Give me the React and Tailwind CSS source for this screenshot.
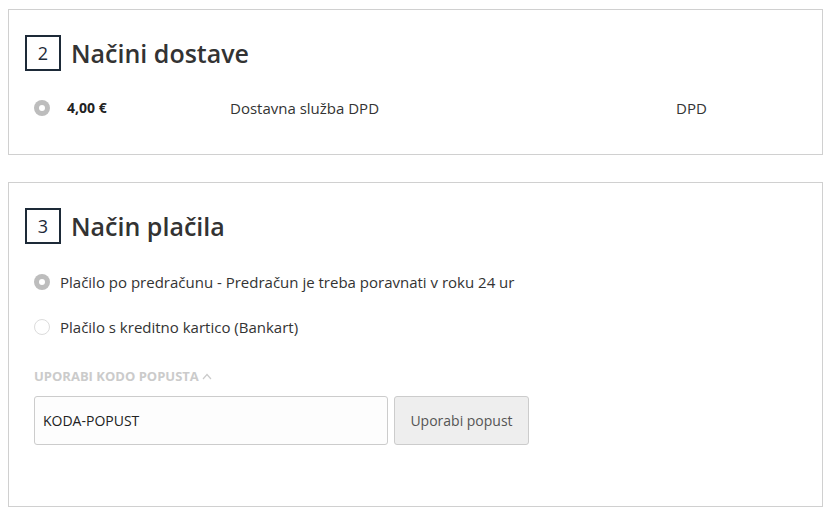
import { useState } from 'react';

function StepHeader({ num, title }) {
  return (
    <div className="flex items-center gap-[10px]">
      <div className="flex h-[36px] w-[36px] items-center justify-center border-2 border-[#1d2a38] text-[18px] text-[#1d2a38]">
        {num}
      </div>
      <h2 className="text-[25px] font-semibold leading-none text-[#333]">{title}</h2>
    </div>
  );
}

function Radio({ checked, onClick }) {
  return (
    <button
      onClick={onClick}
      className={`flex h-4 w-4 shrink-0 items-center justify-center rounded-full ${
        checked ? 'bg-[#bdbdbd]' : 'border border-[#dcdcdc] bg-white'
      }`}
    >
      {checked && <span className="h-[6px] w-[6px] rounded-full bg-white" />}
    </button>
  );
}

export default function App() {
  const [payment, setPayment] = useState('predracun');
  const [code, setCode] = useState('KODA-POPUST');

  return (
    <div
      className="min-h-[516px] bg-white pl-2 pr-[7px] pt-[9px] text-[#333]"
      style={{ fontFamily: '"Open Sans", "Liberation Sans", sans-serif' }}
    >
      <section className="h-[146px] border border-[#d0d0d0] px-4 pt-[25px]">
        <StepHeader num="2" title="Načini dostave" />
        <div className="mt-[27px] flex items-center text-[15px] leading-[20px]">
          <div className="w-[42px] pl-[9px]">
            <Radio checked />
          </div>
          <div className="w-[163px] text-[14px] font-bold text-[#222]">4,00 €</div>
          <div className="w-[446px]">Dostavna služba DPD</div>
          <div>DPD</div>
        </div>
      </section>

      <section className="mt-[27px] h-[325px] border border-[#d0d0d0] px-4 pt-[25px]">
        <StepHeader num="3" title="Način plačila" />

        <div className="mt-[28px] space-y-[25px] pl-[9px] text-[15px] leading-[20px]">
          <label className="flex items-center gap-[10px]">
            <Radio checked={payment === 'predracun'} onClick={() => setPayment('predracun')} />
            <span>Plačilo po predračunu - Predračun je treba poravnati v roku 24 ur</span>
          </label>
          <label className="flex items-center gap-[10px]">
            <Radio checked={payment === 'kartica'} onClick={() => setPayment('kartica')} />
            <span>Plačilo s kreditno kartico (Bankart)</span>
          </label>
        </div>

        <div className="mt-[30px] pl-[9px]">
          <div className="flex items-center gap-[3px] text-[13px] font-bold leading-[18px] text-[#cbcbcb]">
            UPORABI KODO POPUSTA
            <svg width="10" height="7" viewBox="0 0 10 7" fill="none" stroke="#cbcbcb" strokeWidth="1.2">
              <path d="M1 6 L5 1.5 L9 6" />
            </svg>
          </div>
          <div className="mt-[11px] flex gap-[6px]">
            <input
              value={code}
              onChange={(e) => setCode(e.target.value)}
              className="h-[49px] w-[354px] rounded-[3px] border border-[#ccc] bg-[#fdfdfd] px-2 text-[14px] text-[#222] outline-none"
            />
            <button className="h-[49px] w-[135px] rounded-[3px] border border-[#ccc] bg-[#eee] text-[14px] text-[#555]">
              Uporabi popust
            </button>
          </div>
        </div>
      </section>
    </div>
  );
}
